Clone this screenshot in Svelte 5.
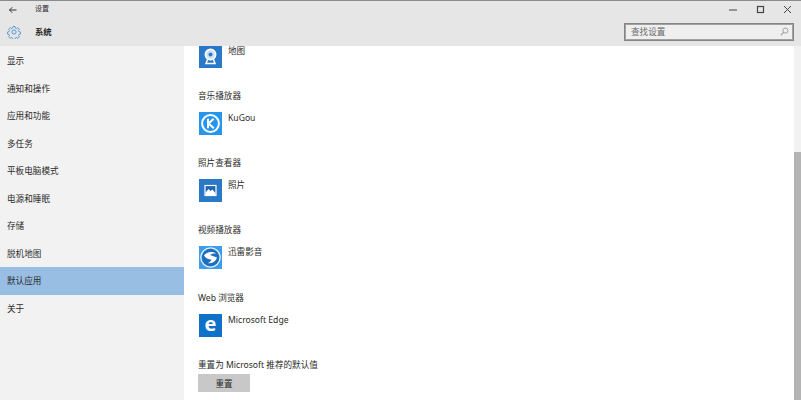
<script lang="ts">
  const navItems = ["显示", "通知和操作", "应用和功能", "多任务", "平板电脑模式", "电源和睡眠", "存储", "脱机地图", "默认应用", "关于"];
  const selected = "默认应用";
  const apps = [
    { heading: "", name: "地图", icon: "map" },
    { heading: "音乐播放器", name: "KuGou", icon: "kugou" },
    { heading: "照片查看器", name: "照片", icon: "photo" },
    { heading: "视频播放器", name: "迅雷影音", icon: "xunlei" },
    { heading: "Web 浏览器", name: "Microsoft Edge", icon: "edge" },
  ];
</script>

<div class="window">
  <header class="head">
    <div class="titlebar">
      <svg class="back" width="10" height="10" viewBox="0 0 10 10"><path d="M8.500 5H1.500M4.200 2.300 1.500 5l2.700 2.700" fill="none" stroke="#333" stroke-width="1"/></svg>
      <span class="title">设置</span>
      <div class="controls">
        <svg width="10" height="10" viewBox="0 0 10 10"><path d="M0 5h8" stroke="#444" stroke-width="1"/></svg>
        <svg width="10" height="10" viewBox="0 0 10 10"><rect x="1.500" y="1.500" width="6" height="6" fill="none" stroke="#444" stroke-width="1.200"/></svg>
        <svg width="10" height="10" viewBox="0 0 10 10"><path d="M1 1l7 7M8 1 1 8" stroke="#444" stroke-width="1"/></svg>
      </div>
    </div>
    <div class="subbar">
      <svg class="gear" width="14" height="14" viewBox="0 0 24 24"><path d="M10 1.500h4l.7 3.200 2 .9 2.800-1.800 2.800 2.800-1.800 2.800.9 2 3.100.7v3.800l-3.100.7-.9 2 1.800 2.800-2.800 2.800-2.800-1.800-2 .9-.7 3.100h-4l-.7-3.100-2-.9-2.800 1.800-2.800-2.800 1.800-2.800-.9-2-3.100-.7v-3.800l3.100-.7.9-2-1.800-2.800 2.800-2.800 2.800 1.800 2-.9z" transform="translate(1.200 1.200) scale(.9)" fill="none" stroke="#4a8fd0" stroke-width="1.600"/><circle cx="12" cy="12" r="3.600" fill="none" stroke="#4a8fd0" stroke-width="1.600"/></svg>
      <span class="section">系统</span>
      <div class="search">
        <span>查找设置</span>
        <svg width="9" height="9" viewBox="0 0 10 10"><circle cx="6" cy="4" r="2.800" fill="none" stroke="#999" stroke-width="1"/><path d="M4 6 1 9" stroke="#999" stroke-width="1.200"/></svg>
      </div>
    </div>
  </header>

  <div class="body">
    <nav class="nav">
      {#each navItems as item}
        <div class="nav-item" class:active={item === selected}>{item}</div>
      {/each}
    </nav>

    <main class="content">
      <div class="scrolled">
        {#each apps as app}
          <section class="group">
            {#if app.heading}<h3>{app.heading}</h3>{/if}
            <div class="app">
              <div class="tile {app.icon}">
                {#if app.icon === "map"}
                  <svg width="23" height="23" viewBox="0 0 23 23"><circle cx="11.500" cy="9.500" r="5.200" fill="#cfe3f5" stroke="#fff" stroke-width="1.500"/><circle cx="11.500" cy="9.500" r="2" fill="#2a78c8"/><path d="M8.500 14.500 7 18.500h9l-1.500-4" fill="none" stroke="#fff" stroke-width="1.500"/></svg>
                {:else if app.icon === "kugou"}
                  <svg width="23" height="23" viewBox="0 0 23 23"><circle cx="11.500" cy="11.500" r="8.400" fill="none" stroke="#fff" stroke-width="2"/><path d="M9 6.800v9.400M14.600 6.800 9.600 11.500l5.200 4.700" fill="none" stroke="#fff" stroke-width="2"/></svg>
                {:else if app.icon === "photo"}
                  <svg width="23" height="23" viewBox="0 0 23 23"><rect x="6" y="6.500" width="11" height="10" fill="#1f66b0" stroke="#fff" stroke-width="1.200"/><path d="M6.500 16v-2.500l3-3.500 2 2 2-1.500 3 3.500V16z" fill="#fff"/></svg>
                {:else if app.icon === "xunlei"}
                  <svg width="23" height="23" viewBox="0 0 23 23"><circle cx="11.500" cy="11.500" r="9.600" fill="#1f6fbe" stroke="#dff0fc" stroke-width="1.400"/><path d="M5 9.500c2.500-3.500 8-4.500 12-2-2.500-.4-5 .3-6 1.500l7 2.500c-1 3.500-5 6.500-9 5.500 1.500-.5 3-1.800 3.500-3.300C9.500 13.500 6.500 12 5 9.500z" fill="#fff"/></svg>
                {:else}
                  <span class="edge-e">e</span>
                {/if}
              </div>
              <span class="app-name">{app.name}</span>
            </div>
          </section>
        {/each}
        <section class="reset">
          <h3>重置为 Microsoft 推荐的默认值</h3>
          <button type="button">重置</button>
        </section>
      </div>
    </main>

    <div class="scrollbar"><div class="thumb"></div></div>
  </div>
</div>

<style>
  :global(body) { margin: 0; }
  .window {
    width: 801px;
    height: 400px;
    overflow: hidden;
    display: flex;
    flex-direction: column;
    background: #fff;
    color: #2b2b2b;
    font-family: "Noto Sans", "Noto Sans CJK SC", sans-serif;
    font-size: 8.6px;
  }

  .head {
    height: 46px;
    flex: none;
    box-sizing: border-box;
    background: #e6e6e6;
    border-top: 1px solid #8c8c8c;
  }
  .titlebar {
    height: 17px;
    display: flex;
    align-items: center;
    padding-left: 8px;
  }
  .title { margin-left: 17px; margin-top: -3px; font-size: 7px; }
  .controls {
    margin-left: auto;
    margin-right: 8px;
    display: flex;
    gap: 17px;
  }
  .subbar {
    display: flex;
    align-items: center;
    height: 28px;
    padding-left: 7px;
  }
  .section { margin-left: 14px; margin-top: -2px; font-size: 8.400px; font-weight: 700; }
  .search {
    margin-left: auto;
    margin-right: 7px;
    width: 170px;
    height: 18px;
    box-sizing: border-box;
    border: 1px solid #858585;
    outline: 1px solid #a0a0a0;
    outline-offset: -2px;
    background: #efefef;
    padding: 0 4px 2px 6px;
    display: flex;
    align-items: center;
    justify-content: space-between;
    color: #6a6a6a;
  }

  .body { flex: 1; display: flex; min-height: 0; }
  .nav { width: 184px; flex: none; background: #f2f2f2; padding-top: 1px; }
  .nav-item {
    height: 27.500px;
    line-height: 28.500px;
    padding-left: 7px;
  }
  .nav-item.active { background: #99bee3; }

  .content { flex: 1; overflow: hidden; padding-left: 14px; }
  .scrolled { margin-top: -1.500px; }
  .group { height: 67.400px; }
  .group:first-child { height: 45px; }
  h3 {
    margin: 0;
    height: 13px;
    line-height: 13px;
    font-size: 8.600px;
    font-weight: 400;
  }
  .group h3 { margin-bottom: 9px; }
  .app { display: flex; gap: 6px; margin-left: 1px; }
  .tile { width: 23px; height: 23px; flex: none; background: #2a78c8; display: flex; align-items: center; justify-content: center; }
  .kugou { background: #2595ee; }
  .xunlei { background: #3d9cec; }
  .edge { background: #0f72c8; }
  .edge-e { color: #fff; font-size: 20px; font-weight: 700; line-height: 20px; font-family: "Open Sans", sans-serif; margin-top: -3px; }
  .app-name { line-height: 9px; margin-top: 2.200px; }
  button {
    display: block;
    margin-top: 2px;
    width: 52px;
    height: 18px;
    padding: 0;
    border: 0;
    background: #c8c8c8;
    color: #2b2b2b;
    font: inherit;
  }

  .scrollbar { width: 7px; flex: none; background: #f2f2f2; }
  .thumb { margin-top: 106px; height: 248px; background: #b4b4b4; }
</style>
